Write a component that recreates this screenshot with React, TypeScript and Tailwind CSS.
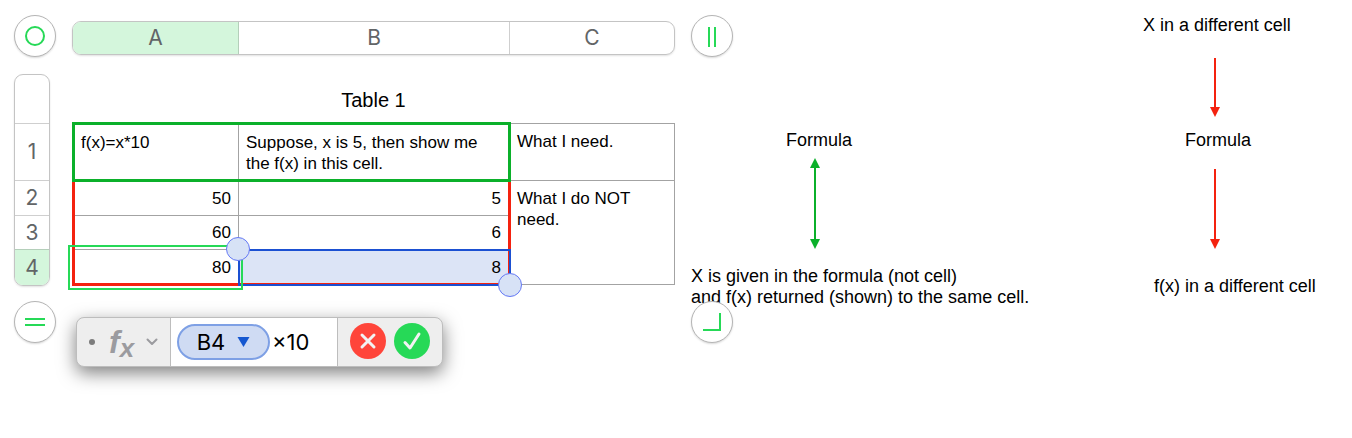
import { useState } from "react";
import type { ReactNode } from "react";

const columns = [
  { name: "A", className: "w-[166px] border-r border-[#b4cfba] bg-[#d4f6dc]" },
  { name: "B", className: "w-[271px] border-r border-[#cfcfcf]" },
  { name: "C", className: "flex-1" },
];

const rows = [
  { name: "", className: "h-[49px] border-b border-[#cfcfcf]" },
  { name: "1", className: "h-[57px] border-b border-[#cfcfcf]" },
  { name: "2", className: "h-[35px] border-b border-[#cfcfcf]" },
  { name: "3", className: "h-[34px] border-b border-[#b4cfba]" },
  { name: "4", className: "h-[35px] bg-[#d4f6dc]" },
];

// text boxes that float freely on the canvas
const notes = [
  { className: "left-[786px] top-[130px]", lines: ["Formula"] },
  {
    className: "left-[691px] top-[266px]",
    lines: [
      "X is given in the formula (not cell)",
      "and f(x) returned (shown) to the same cell.",
    ],
  },
  { className: "left-[1143px] top-[15px]", lines: ["X in a different cell"] },
  { className: "left-[1185px] top-[130px]", lines: ["Formula"] },
  { className: "left-[1154px] top-[276px]", lines: ["f(x) in a different cell"] },
];

const arrows = [
  { className: "left-[810px] top-[158px] text-[#0bb02a]", length: 91, both: true },
  { className: "left-[1210px] top-[58px] text-[#f4220f]", length: 59, both: false },
  { className: "left-[1210px] top-[169px] text-[#f4220f]", length: 80, both: false },
];

function Arrow({
  className,
  length,
  both,
}: {
  className: string;
  length: number;
  both: boolean;
}) {
  return (
    <svg
      width="10"
      height={length}
      className={`absolute ${className}`}
      fill="currentColor"
      aria-hidden="true"
    >
      <rect x="4" y={both ? 8 : 0} width="2" height={length - (both ? 16 : 8)} />
      <path d={`M0 ${length - 10}H10L5 ${length}Z`} />
      {both && <path d="M0 10H10L5 0Z" />}
    </svg>
  );
}

function RoundHandle({ label, children }: { label: string; children: ReactNode }) {
  return (
    <button
      type="button"
      aria-label={label}
      className="flex size-[42px] shrink-0 items-center justify-center rounded-full border border-[#b5b5b5] bg-white text-[#26d957] shadow-[0_1px_2px_rgba(0,0,0,0.15)]"
    >
      <svg width="22" height="22" fill="none" stroke="currentColor" strokeWidth="2">
        {children}
      </svg>
    </button>
  );
}

function DataTable() {
  return (
    <div className="relative">
      <table
        aria-label="Table 1"
        className="w-full table-fixed border-separate border-spacing-0 border-t border-l border-[#a3a3a3] text-[17px] leading-[21px]"
      >
        <colgroup>
          <col className="w-[166px]" />
          <col className="w-[271px]" />
          <col />
        </colgroup>
        <tbody>
          <tr className="h-[57px]">
            <td className="border-r border-b border-[#a3a3a3] px-2 pt-2 align-top">
              f(x)=x*10
            </td>
            <td className="border-r border-b border-[#a3a3a3] px-[7px] pt-2 align-top">
              Suppose, x is 5, then show me the f(x) in this cell.
            </td>
            <td className="border-r border-b border-[#a3a3a3] px-[7px] pt-[7px] align-top">
              What I need.
            </td>
          </tr>
          <tr className="h-[35px]">
            <td className="border-r border-b border-[#a3a3a3] px-[7px] text-right">50</td>
            <td className="border-r border-b border-[#a3a3a3] px-2 text-right">5</td>
            <td
              rowSpan={3}
              className="border-r border-b border-[#a3a3a3] px-[7px] pt-[7px] align-top"
            >
              What I do NOT need.
            </td>
          </tr>
          <tr className="h-[34px]">
            <td className="border-r border-b border-[#a3a3a3] px-[7px] text-right">60</td>
            <td className="border-r border-b border-[#a3a3a3] px-2 text-right">6</td>
          </tr>
          <tr className="h-[35px]">
            <td className="border-r border-b border-[#a3a3a3] px-[7px] text-right">80</td>
            <td className="border-r border-b border-[#a3a3a3] bg-[#dce4f6] px-2 text-right">
              8
            </td>
          </tr>
        </tbody>
      </table>

      {/* Range frames */}
      <div className="pointer-events-none absolute left-0 top-14 h-[107px] w-[439px] border-[3px] border-[#f4220f]" />
      <div className="pointer-events-none absolute -top-px left-0 h-[60px] w-[439px] border-[3px] border-[#0bb02a]" />

      {/* Selection */}
      <div className="pointer-events-none absolute left-[166px] top-[126px] h-[37px] w-[273px] border-2 border-[#1b50d2]" />
      <div className="pointer-events-none absolute -left-1 top-[122px] h-[45px] w-[175px] border-2 border-[#26d957]" />
      <span className="absolute left-[154px] top-[114px] size-6 rounded-full border border-[#6478f5] bg-[#d7e2f6]" />
      <span className="absolute left-[426px] top-[150px] size-6 rounded-full border border-[#6478f5] bg-[#d7e2f6]" />
    </div>
  );
}

function FormulaBar() {
  const [formula, setFormula] = useState("×10");

  return (
    <div className="ml-1 mt-4 flex h-[50px] w-[367px] overflow-hidden rounded-lg border border-[#bdbdbd] bg-[#eeeeee] font-[Inter,sans-serif] text-[22px] shadow-[0_6px_18px_rgba(0,0,0,0.5)]">
      <button
        type="button"
        aria-label="Functions"
        className="flex w-[94px] items-center border-r border-[#bdbdbd] pl-3"
      >
        <span className="size-[6px] rounded-full bg-[#7c7c7c]" />
        <span className="ml-[14px] font-['Liberation_Sans',Arial,sans-serif] text-[32px] font-bold italic leading-8 text-[#9b9b9f]">
          f<sub className="bottom-[-4px] text-[26px] leading-none">x</sub>
        </span>
        <svg
          width="12"
          height="8"
          className="ml-3"
          fill="none"
          stroke="#9b9b9f"
          strokeWidth="2"
          strokeLinecap="round"
          strokeLinejoin="round"
        >
          <path d="M1.5 1.5L6 6L10.5 1.5" />
        </svg>
      </button>

      <div className="flex min-w-0 flex-1 items-center bg-white pl-[6px]">
        <button
          type="button"
          className="flex h-9 w-[93px] shrink-0 items-center justify-center gap-3 rounded-full border-2 border-[#7ea0e5] bg-[#cfdbf3]"
        >
          B4
          <svg width="13" height="12" fill="#1557d0" aria-hidden="true">
            <path d="M0.5 1H12.5L6.5 11Z" />
          </svg>
        </button>
        <input
          aria-label="Formula"
          value={formula}
          onChange={(e) => setFormula(e.target.value)}
          className="w-full min-w-0 bg-transparent pl-[2px] outline-none"
        />
      </div>

      <div className="flex w-[105px] items-center gap-2 border-l border-[#bdbdbd] pb-[2px] pl-3">
        <button
          type="button"
          aria-label="Cancel"
          className="flex size-9 items-center justify-center rounded-full bg-[#ff453a]"
        >
          <svg width="18" height="18" stroke="#f2f2f2" strokeWidth="3" strokeLinecap="round">
            <path d="M3 3L15 15M15 3L3 15" />
          </svg>
        </button>
        <button
          type="button"
          aria-label="Accept"
          className="flex size-9 items-center justify-center rounded-full bg-[#26d957]"
        >
          <svg
            width="20"
            height="20"
            fill="none"
            stroke="#f2f2f2"
            strokeWidth="3"
            strokeLinecap="round"
            strokeLinejoin="round"
          >
            <path d="M3 11.5L8 17L17 3" />
          </svg>
        </button>
      </div>
    </div>
  );
}

export default function App() {
  return (
    <main className="relative min-h-screen bg-white font-['Liberation_Sans',Arial,sans-serif] text-black">
      {notes.map((note) => (
        <p
          key={note.className}
          className={`absolute whitespace-nowrap text-lg leading-[21px] ${note.className}`}
        >
          {note.lines.map((line) => (
            <span key={line} className="block">
              {line}
            </span>
          ))}
        </p>
      ))}
      {arrows.map((arrow) => (
        <Arrow key={arrow.className} {...arrow} />
      ))}

      <section className="relative w-fit pl-[14px] pt-[15px]">
        {/* Column headings */}
        <div className="flex gap-4">
          <RoundHandle label="Select table">
            <circle cx="11" cy="11" r="9" />
          </RoundHandle>
          <div className="mt-[6px] flex h-[34px] w-[603px] overflow-hidden rounded-[9px] border border-[#c4c4c4] font-[Inter,sans-serif] text-[21px] text-[#626567] shadow-[0_1px_2px_rgba(0,0,0,0.12)]">
            {columns.map((column) => (
              <button key={column.name} type="button" className={column.className}>
                {column.name}
              </button>
            ))}
          </div>
          <RoundHandle label="Add column">
            <path d="M8 2V22M14 2V22" />
          </RoundHandle>
        </div>

        <div className="mt-[17px] flex gap-[22px]">
          {/* Row headings */}
          <div className="flex w-9 flex-col overflow-hidden rounded-[9px] border border-[#c4c4c4] font-[Inter,sans-serif] text-[21px] text-[#626567] shadow-[0_1px_2px_rgba(0,0,0,0.12)]">
            {rows.map((row) => (
              <button
                key={row.name}
                type="button"
                aria-label={row.name ? undefined : "Title row"}
                className={row.className}
              >
                {row.name}
              </button>
            ))}
          </div>
          <div className="w-[603px]">
            <h1 className="flex h-[49px] items-center justify-center pt-[2px] text-[20px]">
              Table 1
            </h1>
            <DataTable />
          </div>
        </div>

        <div className="mt-[15px] flex gap-4">
          <RoundHandle label="Add row">
            <path d="M1 8H21M1 14H21" />
          </RoundHandle>
          <div className="w-[603px]">
            <FormulaBar />
          </div>
          <RoundHandle label="Add row and column">
            <path d="M2 19H19V2" />
          </RoundHandle>
        </div>
      </section>
    </main>
  );
}
